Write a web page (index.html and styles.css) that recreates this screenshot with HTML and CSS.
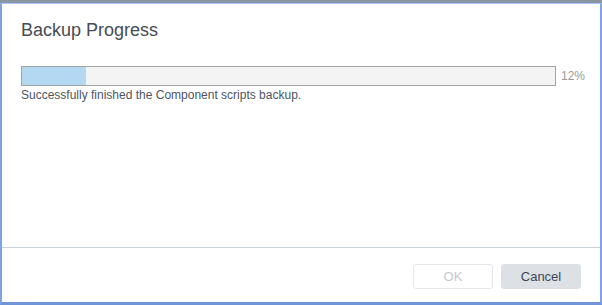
FILE: index.html
```html
<!DOCTYPE html>
<html lang="en">
<head>
    <meta charset="UTF-8">
    <meta name="viewport" content="width=device-width, initial-scale=1.0">
    <title>Backup Progress</title>
    <link rel="stylesheet" href="styles.css">
</head>
<body>
    <div class="dialog">
        <div class="dialog-header">
            <h1>Backup Progress</h1>
        </div>

        <div class="dialog-body">
            <div class="progress-row">
                <div class="progress-bar">
                    <div class="progress-fill" style="width: 12%"></div>
                </div>
                <span class="progress-value">12%</span>
            </div>
            <div class="status">Successfully finished the Component scripts backup.</div>
        </div>

        <div class="dialog-footer">
            <button class="btn btn-ok" disabled>OK</button>
            <button class="btn btn-cancel">Cancel</button>
        </div>
    </div>
</body>
</html>
```

FILE: styles.css
```css
html, body {
    height: 100%;
}
body {
    margin: 0;
    padding-top: 3px;
    box-sizing: border-box;
    background-color: #8c96a3;
    font-family: "Liberation Sans", Arial, sans-serif;
}
.dialog {
    height: 100%;
    box-sizing: border-box;
    display: flex;
    flex-direction: column;
    background-color: #fff;
    border-top: 1px solid #a9c5f5;
    border-left: 2px solid #7ea4e6;
    border-right: 2px solid #7ea4e6;
    border-bottom: 3px solid #6f95d8;
}
.dialog-header {
    padding: 15px 19px 0;
}
.dialog-header h1 {
    margin: 0;
    font-size: 18px;
    font-weight: normal;
    line-height: 22px;
    color: #464c55;
}
.dialog-body {
    flex: 1;
    padding: 25px 10px 0 19px;
}
.progress-row {
    display: flex;
    align-items: center;
}
.progress-bar {
    flex: none;
    width: 533px;
    height: 18px;
    border: 1px solid #a3a3a3;
    background-color: #f4f4f4;
}
.progress-fill {
    height: 100%;
    background-color: #b5d8f2;
}
.progress-value {
    margin-left: 5px;
    font-size: 12px;
    color: #9a9a9a;
}
.status {
    margin-top: 2px;
    font-size: 12px;
    line-height: 14px;
    color: #4d5563;
}
.dialog-footer {
    height: 55px;
    box-sizing: border-box;
    border-top: 1px solid #c9d1da;
    display: flex;
    justify-content: flex-end;
    align-items: flex-start;
    gap: 8px;
    padding: 16px 19px 0;
}
.btn {
    width: 80px;
    height: 25px;
    border-radius: 3px;
    font-family: "Liberation Sans", Arial, sans-serif;
    font-size: 13px;
    cursor: pointer;
}
.btn-ok {
    background-color: #fff;
    border: 1px solid #e3e7eb;
    color: #c5c9ce;
}
.btn-cancel {
    background-color: #dde1e6;
    border: 1px solid #dde1e6;
    color: #3f4753;
}
```
